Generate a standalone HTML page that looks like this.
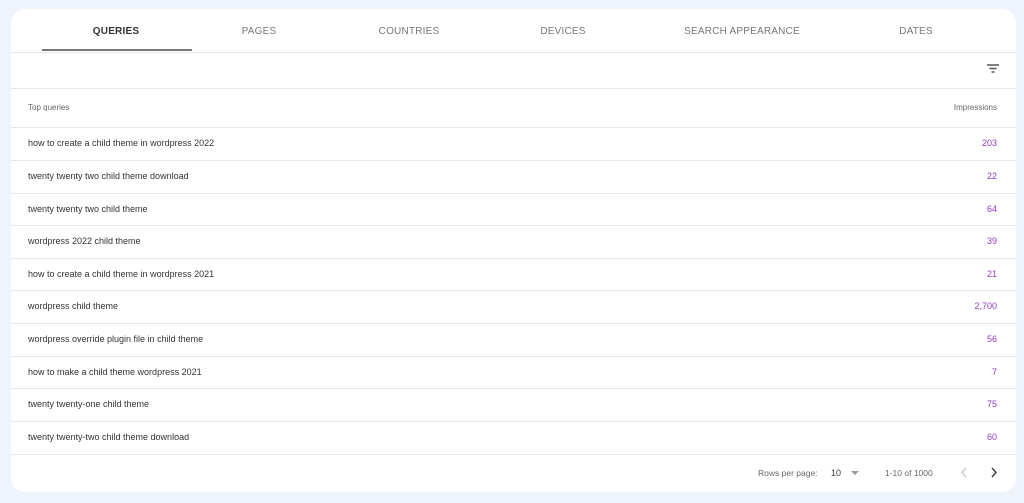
<!DOCTYPE html>
<html><head><style>
*{margin:0;padding:0;box-sizing:border-box}
body{width:1024px;height:503px;background:#eef3fc;font-family:"Liberation Sans",Arial,sans-serif;position:relative;overflow:hidden}
.card{position:absolute;left:11px;top:9px;width:1005px;height:483px;background:#fff;border-radius:14px;overflow:hidden}
.tab{position:absolute;top:17px;font-size:10px;color:#777;letter-spacing:.2px;transform:translateX(-50%);white-space:nowrap}
.tab.a{color:#333;font-weight:bold}
.ul{position:absolute;left:31px;top:40px;width:150px;height:2px;background:#777}
.line{position:absolute;left:0;right:0;height:1px;background:#e8e8e8}
.row{position:absolute;left:0;right:0;height:33px;font-size:9px;color:#333}
.row span{position:absolute;top:11px}
.row .q{left:17px}
.row .v{right:19px;color:#8e3ac0}
.hdr{font-size:8px;color:#666}
</style></head><body>
<div class="card">
<div class="tab a" style="left:105px">QUERIES</div>
<div class="tab" style="left:248px">PAGES</div>
<div class="tab" style="left:398px">COUNTRIES</div>
<div class="tab" style="left:552px">DEVICES</div>
<div class="tab" style="left:731px">SEARCH APPEARANCE</div>
<div class="tab" style="left:905px">DATES</div>
<div class="ul"></div>
<div class="line" style="top:43px"></div>
<svg style="position:absolute;left:975px;top:54px" width="14" height="12" viewBox="0 0 14 12"><path d="M1 2h12M3.5 5.5h7M5.5 9h3" stroke="#555" stroke-width="1.4"/></svg>
<div class="line" style="top:79px"></div>
<div class="hdr" style="position:absolute;left:17px;top:94px">Top queries</div>
<div class="hdr" style="position:absolute;right:19px;top:94px">Impressions</div>
<div class="line" style="top:118px"></div>
<div class="row" style="top:118px"><span class="q">how to create a child theme in wordpress 2022</span><span class="v">203</span></div>
<div class="line" style="top:151px"></div>
<div class="row" style="top:151px"><span class="q">twenty twenty two child theme download</span><span class="v">22</span></div>
<div class="line" style="top:184px"></div>
<div class="row" style="top:184px"><span class="q">twenty twenty two child theme</span><span class="v">64</span></div>
<div class="line" style="top:216px"></div>
<div class="row" style="top:216px"><span class="q">wordpress 2022 child theme</span><span class="v">39</span></div>
<div class="line" style="top:249px"></div>
<div class="row" style="top:249px"><span class="q">how to create a child theme in wordpress 2021</span><span class="v">21</span></div>
<div class="line" style="top:281px"></div>
<div class="row" style="top:281px"><span class="q">wordpress child theme</span><span class="v">2,700</span></div>
<div class="line" style="top:314px"></div>
<div class="row" style="top:314px"><span class="q">wordpress override plugin file in child theme</span><span class="v">56</span></div>
<div class="line" style="top:347px"></div>
<div class="row" style="top:347px"><span class="q">how to make a child theme wordpress 2021</span><span class="v">7</span></div>
<div class="line" style="top:379px"></div>
<div class="row" style="top:379px"><span class="q">twenty twenty-one child theme</span><span class="v">75</span></div>
<div class="line" style="top:412px"></div>
<div class="row" style="top:412px"><span class="q">twenty twenty-two child theme download</span><span class="v">60</span></div>
<div class="line" style="top:445px"></div>
<div style="position:absolute;top:459px;left:747px;font-size:8.5px;color:#666">Rows per page:</div>
<div style="position:absolute;top:459px;left:820px;font-size:9px;color:#333">10</div>
<svg style="position:absolute;left:840px;top:462px" width="8" height="5"><path d="M0 0h8L4 4z" fill="#999"/></svg>
<div style="position:absolute;top:459px;left:874px;font-size:8.5px;color:#666">1-10 of 1000</div>
<svg style="position:absolute;left:949px;top:458px" width="8" height="11"><path d="M6 1L2 5.5 6 10" stroke="#ccc" stroke-width="1.5" fill="none"/></svg>
<svg style="position:absolute;left:979px;top:458px" width="8" height="11"><path d="M2 1l4 4.5L2 10" stroke="#444" stroke-width="1.5" fill="none"/></svg>
</div>
</body></html>
